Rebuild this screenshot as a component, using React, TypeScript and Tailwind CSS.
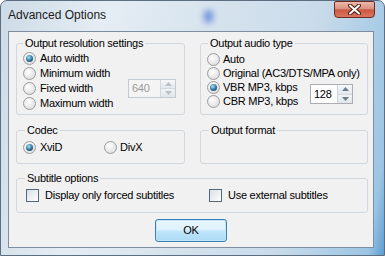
import React from 'react';

function Radio({ checked }: { checked?: boolean }) {
  return (
    <span className="w-[13px] h-[13px] shrink-0 rounded-full border border-[#9c9c9c] bg-[radial-gradient(circle_at_40%_35%,#ffffff,#d6d6d6)] flex items-center justify-center">
      {checked && (
        <span className="w-[7px] h-[7px] rounded-full bg-[radial-gradient(circle_at_40%_35%,#a6e6fb,#2d6e98_55%,#113a58)]" />
      )}
    </span>
  );
}

function Check() {
  return (
    <span className="w-[13px] h-[13px] shrink-0 border border-[#55687a] bg-[linear-gradient(135deg,#d9e0e6,#ffffff)]" />
  );
}

function SpinArrows({ disabled }: { disabled?: boolean }) {
  const fill = disabled ? '#b9c0c7' : '#6d7d8c';
  return (
    <span
      className={
        'flex flex-col w-[15px] h-full border-l ' +
        (disabled ? 'border-[#d3d8dd]' : 'border-[#c9d2da]')
      }
    >
      <span className="flex-1 flex items-center justify-center bg-[linear-gradient(#f6f8fa,#e3e8ed)] border-b border-[#d3d8dd]">
        <svg width="7" height="4" viewBox="0 0 7 4">
          <path d="M0 4 L3.5 0 L7 4 Z" fill={fill} />
        </svg>
      </span>
      <span className="flex-1 flex items-center justify-center bg-[linear-gradient(#f1f4f7,#dfe5eb)]">
        <svg width="7" height="4" viewBox="0 0 7 4">
          <path d="M0 0 L3.5 4 L7 0 Z" fill={fill} />
        </svg>
      </span>
    </span>
  );
}

function Group({
  title,
  offset,
  className,
  children,
}: {
  title: string;
  offset: string;
  className: string;
  children?: React.ReactNode;
}) {
  return (
    <fieldset className={'border border-[#d0d7de] rounded-[3px] p-0 m-0 min-w-0 ' + className}>
      <legend className={'px-[2px] leading-[13px] whitespace-nowrap ' + offset}>{title}</legend>
      {children}
    </fieldset>
  );
}

export default function App() {
  return (
    <div className="relative w-[385px] h-[256px] overflow-hidden rounded-t-[7px] border border-[#5d6e80] bg-[linear-gradient(100deg,#cddbe7_0%,#e5edf4_25%,#d6e3ee_50%,#c9dbea_75%,#9cc5e4_96%,#5e9fd2_100%)] font-['Liberation_Sans',Arial,sans-serif] text-[11px] tracking-[-0.25px] text-black whitespace-nowrap">
      <span className="absolute left-[203px] top-[9px] w-[9px] h-[13px] rounded-full bg-[#3f6fd2] blur-[3px] opacity-70" />
      <div className="h-[30px] flex items-start pl-[7px]">
        <span className="mt-[6px] text-[12px] leading-[16px] tracking-normal text-[#1b1b1b]">Advanced Options</span>
        <div className="ml-auto mr-[9px] w-[41px] h-[17px] rounded-b-[4px] rounded-t-[2px] border border-[#6e2b21] bg-[linear-gradient(#ecb9ab,#dc9180_45%,#c95842_52%,#d9765f)] flex items-center justify-center">
          <svg width="13" height="11" viewBox="0 0 13 11">
            <path d="M2 1.5 L11 9.5 M11 1.5 L2 9.5" stroke="#4a1c14" strokeWidth="4" strokeLinecap="round" />
            <path d="M2 1.5 L11 9.5 M11 1.5 L2 9.5" stroke="#ffffff" strokeWidth="2" strokeLinecap="round" />
          </svg>
        </div>
      </div>

      <div className="ml-[7px] w-[366px] h-[217px] border border-[#7f8e9e] bg-[#f1f1f1] pl-[7px] pt-[5px] flex flex-col">
        <div className="grid grid-cols-[169px_168px] gap-x-[15px]">
          <Group title="Output resolution settings" offset="ml-[6px]" className="h-[78px]">
            <div className="pl-[6px] pr-[8px] mt-[1px] flex flex-col">
              <div className="h-[15px] flex items-center gap-[4px]">
                <Radio checked />
                <span>Auto width</span>
              </div>
              <div className="h-[15px] flex items-center gap-[4px]">
                <Radio />
                <span>Minimum width</span>
              </div>
              <div className="h-[15px] flex items-center gap-[4px]">
                <Radio />
                <span>Fixed width</span>
                <span className="ml-auto -my-[2px] w-[48px] h-[19px] border border-[#c3cad1] bg-[#f4f4f4] flex items-stretch">
                  <span className="flex-1 pl-[3px] leading-[17px] text-[#9a9a9a]">640</span>
                  <SpinArrows disabled />
                </span>
              </div>
              <div className="h-[15px] flex items-center gap-[4px]">
                <Radio />
                <span>Maximum width</span>
              </div>
            </div>
          </Group>

          <Group title="Output audio type" offset="ml-[7px]" className="h-[78px]">
            <div className="pl-[6px] pr-[14px] mt-[2px] flex flex-col">
              <div className="h-[14px] flex items-center gap-[3px]">
                <Radio />
                <span>Auto</span>
              </div>
              <div className="h-[14px] flex items-center gap-[3px]">
                <Radio />
                <span>Original (AC3/DTS/MPA only)</span>
              </div>
              <div className="flex items-center">
                <div className="flex flex-col">
                  <div className="h-[14px] flex items-center gap-[3px]">
                    <Radio checked />
                    <span>VBR MP3, kbps</span>
                  </div>
                  <div className="h-[14px] flex items-center gap-[3px]">
                    <Radio />
                    <span>CBR MP3, kbps</span>
                  </div>
                </div>
                <span className="ml-auto w-[43px] h-[20px] border border-[#abadb3] bg-white flex items-stretch">
                  <span className="flex-1 pl-[3px] leading-[18px]">128</span>
                  <SpinArrows />
                </span>
              </div>
            </div>
          </Group>

          <Group title="Codec" offset="ml-[8px]" className="h-[40px] mt-[9px]">
            <div className="pl-[6px] mt-[3px] h-[15px] flex items-center">
              <div className="w-[81px] flex items-center gap-[4px]">
                <Radio checked />
                <span>XviD</span>
              </div>
              <div className="flex items-center gap-[3px]">
                <Radio />
                <span>DivX</span>
              </div>
            </div>
          </Group>

          <Group title="Output format" offset="ml-[8px]" className="h-[40px] mt-[9px]" />

          <Group title="Subtitle options" offset="ml-[8px]" className="col-span-2 h-[41px] mt-[8px]">
            <div className="pl-[9px] mt-[3px] h-[15px] flex items-center">
              <div className="w-[183px] flex items-center gap-[6px]">
                <Check />
                <span>Display only forced subtitles</span>
              </div>
              <div className="flex items-center gap-[6px]">
                <Check />
                <span>Use external subtitles</span>
              </div>
            </div>
          </Group>
        </div>

        <div className="mt-[6px] flex justify-center pr-[7px]">
          <button className="w-[72px] h-[23px] rounded-[3px] border border-[#3c7fb1] bg-[linear-gradient(#ecf7fd_0%,#dcf1fc_48%,#c1e6fb_52%,#aad9f4_100%)] shadow-[inset_0_0_0_1px_#bfe6fa] text-[11px] leading-[21px]">
            OK
          </button>
        </div>
      </div>
    </div>
  );
}
